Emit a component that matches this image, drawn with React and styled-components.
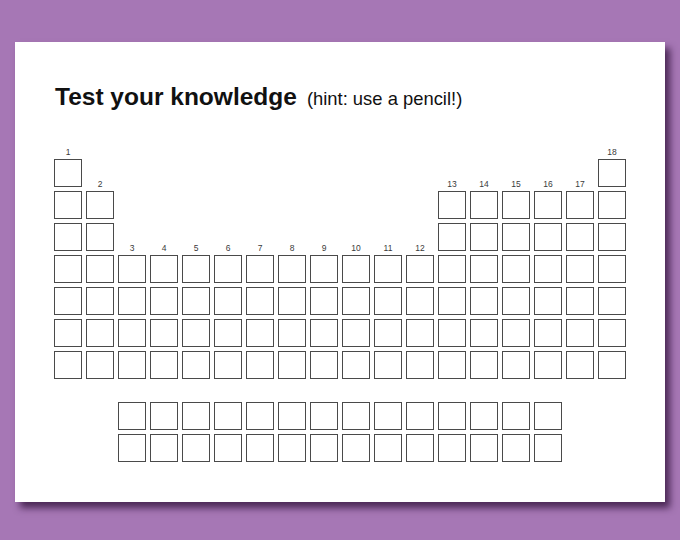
import React from "react";
import styled, { createGlobalStyle } from "styled-components";

const GlobalStyle = createGlobalStyle`
  html, body {
    margin: 0;
    background: #a677b5;
  }
  body {
    font-family: "Liberation Sans", Arial, sans-serif;
  }
`;

const Page = styled.div`
  width: 680px;
  height: 540px;
  padding: 42px 15px;
  box-sizing: border-box;
`;

const Card = styled.div`
  width: 650px;
  height: 460px;
  box-sizing: border-box;
  padding: 41px 0 0 39px;
  background: #fff;
  box-shadow: 5px 6px 7px rgba(45, 15, 55, 0.75);
`;

const Title = styled.h1`
  margin: 0 0 30px 1px;
  font-size: 24.5px;
  line-height: 28px;
  font-weight: 700;
  color: #111;
`;

const Hint = styled.span`
  margin-left: 10px;
  font-size: 18.4px;
  font-weight: 400;
`;

const Table = styled.div`
  display: grid;
  grid-template-columns: repeat(18, 28px);
  grid-template-rows: 12px repeat(7, 28px) 15px 28px 28px;
  gap: 4px;
`;

const Cell = styled.div`
  grid-column: ${(p) => p.$col};
  grid-row: ${(p) => p.$row};
  box-sizing: border-box;
  border: 1px solid #4a4a4a;
`;

const GroupLabel = styled.span`
  grid-column: ${(p) => p.$col};
  grid-row: ${(p) => p.$row};
  align-self: end;
  justify-self: center;
  margin-bottom: -1px;
  font-size: 8.5px;
  line-height: 8px;
  color: #3a3a3a;
`;

const range = (a, b) => Array.from({ length: b - a + 1 }, (_, i) => a + i);

const periods = [
  [1, 18],
  [1, 2, ...range(13, 18)],
  [1, 2, ...range(13, 18)],
  range(1, 18),
  range(1, 18),
  range(1, 18),
  range(1, 18),
];

const cells = [
  ...periods.flatMap((cols, i) => cols.map((col) => ({ row: i + 2, col }))),
  ...[10, 11].flatMap((row) => range(3, 16).map((col) => ({ row, col }))),
];

const labels = [
  { n: 1, row: 1, col: 1 },
  { n: 18, row: 1, col: 18 },
  { n: 2, row: 2, col: 2 },
  ...range(13, 17).map((n) => ({ n, row: 2, col: n })),
  ...range(3, 12).map((n) => ({ n, row: 4, col: n })),
];

export default function App() {
  return (
    <>
      <GlobalStyle />
      <Page>
        <Card>
          <Title>
            Test your knowledge<Hint>(hint: use a pencil!)</Hint>
          </Title>
          <Table>
            {labels.map((l) => (
              <GroupLabel key={`l${l.n}`} $row={l.row} $col={l.col}>
                {l.n}
              </GroupLabel>
            ))}
            {cells.map((c) => (
              <Cell key={`${c.row}-${c.col}`} $row={c.row} $col={c.col} />
            ))}
          </Table>
        </Card>
      </Page>
    </>
  );
}
